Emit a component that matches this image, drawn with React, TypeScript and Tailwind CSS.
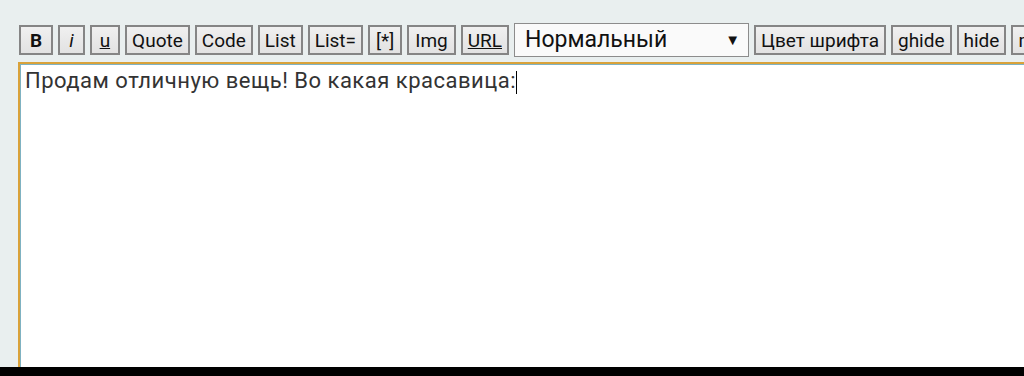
import React from 'react';

const tools = [
  { label: 'B', cls: 'font-bold px-[9px]' },
  { label: 'i', cls: 'italic px-[9px]' },
  { label: 'u', cls: 'underline px-[8px]' },
  { label: 'Quote', cls: 'px-[5px]' },
  { label: 'Code', cls: 'px-[5px]' },
  { label: 'List', cls: 'px-[5px]' },
  { label: 'List=', cls: 'px-[5px]' },
  { label: '[*]', cls: 'px-[6px]' },
  { label: 'Img', cls: 'px-[6px]' },
  { label: 'URL', cls: 'underline px-[5px]' },
];

const extra = ['Цвет шрифта', 'ghide', 'hide', 'more'];

const ToolButton: React.FC<{ label: string; cls?: string }> = ({ label, cls = 'px-[5px]' }) => (
  <button
    type="button"
    className={`h-[30px] shrink-0 border-2 border-[#858585] bg-gradient-to-b from-[#f0f0f0] to-[#e2e2e2] text-[19px] leading-none text-[#111] ${cls}`}
  >
    {label}
  </button>
);

export default function App() {
  return (
    <div className="w-[1024px] h-[376px] overflow-hidden" style={{ fontFamily: 'Roboto, "Noto Sans", sans-serif' }}>
      <div className="h-[367px] bg-[#e9efef] overflow-hidden">
        {/* Toolbar */}
        <div className="flex items-center gap-[5px] pt-[23px] pl-[19px] whitespace-nowrap overflow-hidden">
          {tools.map((t) => (
            <ToolButton key={t.label} label={t.label} cls={t.cls} />
          ))}
          <div className="flex h-[34px] w-[235px] shrink-0 items-center justify-between border border-[#8c8c8c] bg-[#fafafa] pl-[10px] pr-[8px] text-[23px] text-[#111]">
            <span>Нормальный</span>
            <span className="text-[15px]">▼</span>
          </div>
          {extra.map((e) => (
            <ToolButton key={e} label={e} />
          ))}
        </div>

        {/* Message box */}
        <div className="ml-[18px] mt-[5px] h-[320px] w-[1020px] border-2 border-[#d9a23a] shadow-[inset_1px_1px_0_#7fb2c2] bg-white px-[5px] pt-[3px]">
          <p className="text-[22px] leading-[28px] tracking-[0.5px] text-[#333]">
            Продам отличную вещь! Во какая красавица:<span className="inline-block w-px h-[23px] bg-black align-middle" />
          </p>
        </div>
      </div>
      <div className="h-[9px] bg-black" />
    </div>
  );
}
